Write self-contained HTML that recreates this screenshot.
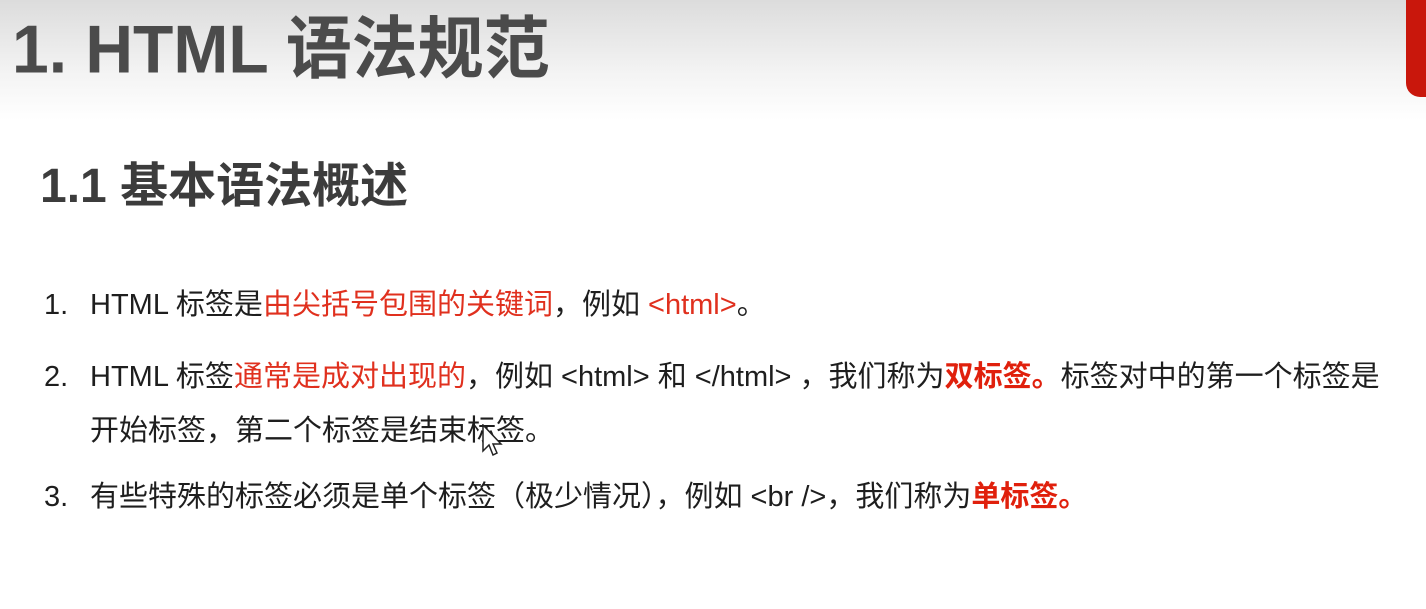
<!DOCTYPE html>
<html><head><meta charset="utf-8"><style>
html,body{margin:0;padding:0;}
body{width:1426px;height:609px;position:relative;overflow:hidden;background:#fff;font-family:"Liberation Sans","Noto Sans CJK SC",sans-serif;}
.hdr{position:absolute;left:0;top:0;width:1426px;height:120px;background:linear-gradient(#dcdcdc,#f3f3f3 60%,#fff);}
.tab{position:absolute;left:1406px;top:0;width:30px;height:97px;background:#c9170c;border-radius:0 0 0 14px;}
h1{position:absolute;left:12px;top:4px;margin:0;font-size:66px;line-height:90px;font-weight:bold;color:#4b4b4b;white-space:nowrap;transform:scaleY(1.03);transform-origin:0 50%;}
h2{position:absolute;left:40px;top:159px;margin:0;font-size:48px;line-height:56px;font-weight:bold;color:#3c3c3c;white-space:nowrap;}
.l{position:absolute;white-space:nowrap;font-size:29px;line-height:40px;color:#1e1e1e;}
.r{color:#e0301e;}
.b{color:#e0200c;font-weight:bold;}
</style></head><body>
<div class="hdr"></div>
<div class="tab"></div>
<h1>1. HTML 语法规范</h1>
<h2>1.1 基本语法概述</h2>
<div class="l" style="left:44px;top:285px">1.</div>
<div class="l" style="left:90px;top:285px">HTML 标签是<span class="r">由尖括号包围的关键词</span>，例如 <span class="r">&lt;html&gt;</span>。</div>
<div class="l" style="left:44px;top:357px">2.</div>
<div class="l" style="left:90px;top:357px">HTML 标签<span class="r">通常是成对出现的</span>，例如 &lt;html&gt; 和 &lt;/html&gt; ，我们称为<span class="b">双标签。</span>标签对中的第一个标签是</div>
<div class="l" style="left:90px;top:411px">开始标签，第二个标签是结束标签。</div>
<div class="l" style="left:44px;top:477px">3.</div>
<div class="l" style="left:90px;top:477px">有些特殊的标签必须是单个标签（极少情况），例如 &lt;br /&gt;，我们称为<span class="b">单标签。</span></div>
<svg style="position:absolute;left:482px;top:424px" width="22" height="34" viewBox="0 0 22 34"><path d="M1 1 L1 27 L7 21 L11 31 L15 29 L11 20 L19 20 Z" fill="#fff" stroke="#222" stroke-width="1.5"/></svg>
</body></html>
